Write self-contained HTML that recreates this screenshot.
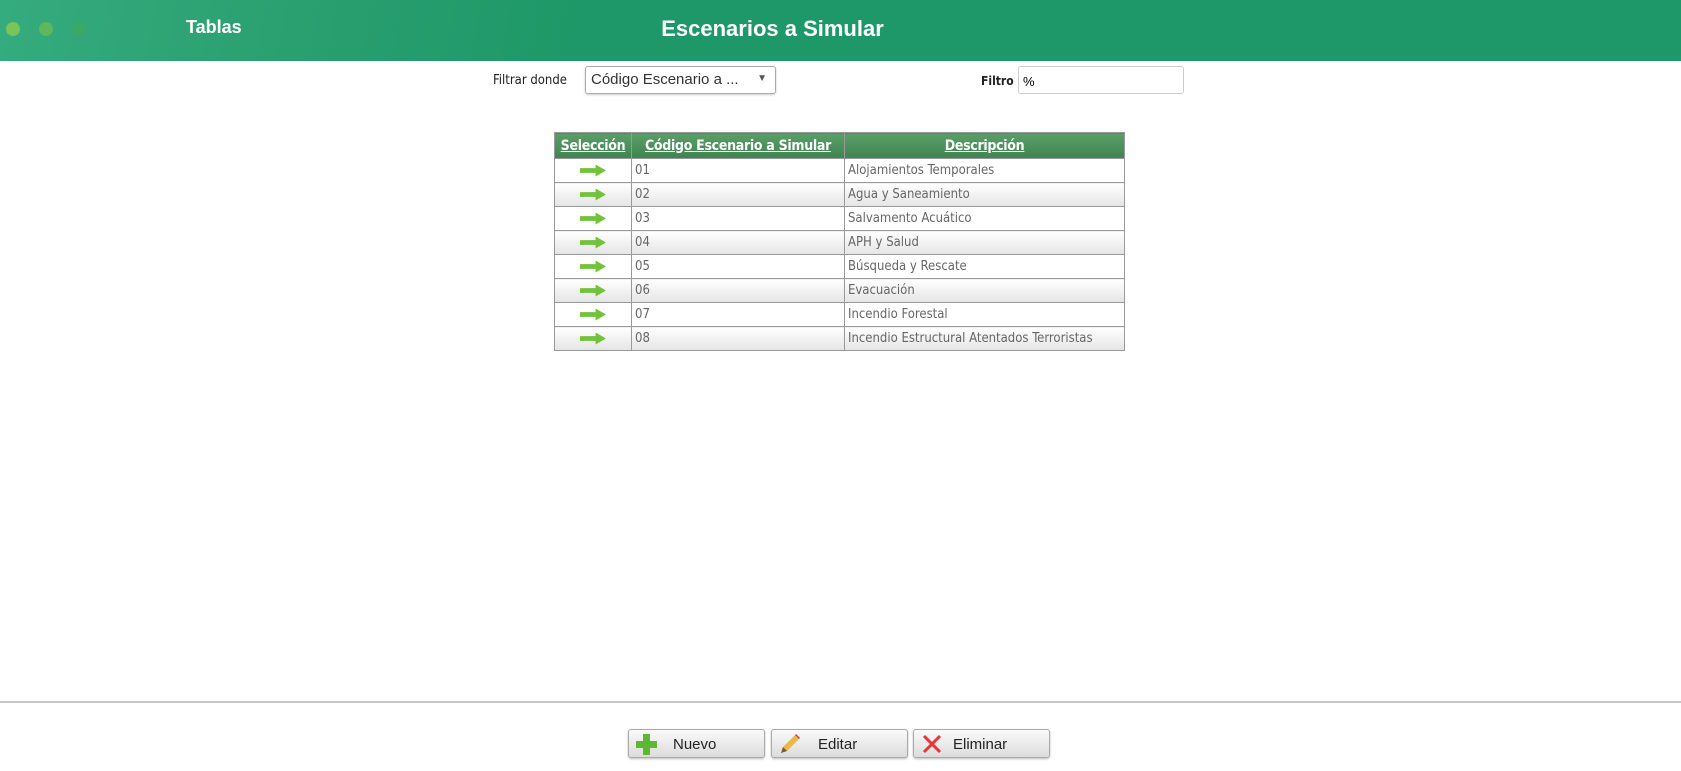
<!DOCTYPE html>
<html><head><meta charset="utf-8"><style>
body{margin:0;width:1681px;height:771px;background:#fff;font-family:"Liberation Sans",sans-serif;position:relative;overflow:hidden}
.hdr{position:absolute;left:0;top:0;width:1681px;height:61px;background:linear-gradient(100deg,#35ac7e 0%,#2a9f70 18%,#1e9868 35%,#1e9868 100%)}
.dot{position:absolute;top:22px;width:14px;height:14px;border-radius:50%}
.t1{position:absolute;left:186px;top:17px;color:#fff;font-weight:bold;font-size:18px}
.t2{position:absolute;width:1681px;text-align:center;top:16px;color:#fff;font-weight:bold;font-size:22px;left:-68px}
.lbl{position:absolute;font-size:13px;color:#222;top:73px;font-family:"DejaVu Sans Condensed","Liberation Sans",sans-serif}
.sel{position:absolute;left:585px;top:66px;width:191px;height:28px;box-sizing:border-box;border:1px solid #aaa;border-radius:3px;font-size:15px;color:#333;padding:4px 5px;box-shadow:0 1px 2px #ccc}
.inp{position:absolute;left:1018px;top:66px;width:166px;height:28px;box-sizing:border-box;border:1px solid #ccc;border-radius:3px;font-size:13px;padding:7px 4px}
table{position:absolute;left:554px;top:132px;border-collapse:collapse;width:571px}
th{height:25px;background:linear-gradient(#5a9e68,#3f8450);color:#fff;font-size:14px;text-decoration:underline;border:1px solid #999;padding:0;font-family:"DejaVu Sans Condensed","Liberation Sans",sans-serif;letter-spacing:-0.3px}
td{height:23px;border:1px solid #999;font-size:13px;color:#666;padding:0 3px;font-family:"DejaVu Sans Condensed","Liberation Sans",sans-serif}
tr:nth-child(odd) td{background:linear-gradient(#fff,#e4e4e4)}
.arr{text-align:center;font-size:0}
.arr::after{content:"";display:inline-block;width:26px;height:12px;background:#72c23c;clip-path:polygon(0 30%,60% 30%,60% 0,100% 50%,60% 100%,60% 70%,0 70%)}
.line{position:absolute;left:0;top:701px;width:1681px;height:2px;background:#c8c8c8}
.btn{position:absolute;top:729px;height:29px;width:137px;box-sizing:border-box;border:1px solid #aaa;border-radius:3px;background:linear-gradient(#fafafa,#dcdcdc);font-size:15px;color:#222;box-shadow:0 1px 2px #bbb}
.btn span{position:absolute;top:6px}
.btn svg{position:absolute;left:6px;top:3px}
</style></head><body>
<div class="hdr">
<div class="dot" style="left:6px;background:#7cc35a"></div>
<div class="dot" style="left:39px;background:#5fb75c"></div>
<div class="dot" style="left:72px;background:#3aa965"></div>
<div class="t1">Tablas</div>
<div class="t2">Escenarios a Simular</div>
</div>
<div class="lbl" style="left:493px">Filtrar donde</div>
<div class="sel">Código Escenario a ...<span style="position:absolute;right:8px;top:6px;font-size:10px;color:#555">▼</span></div>
<div class="lbl" style="left:981px;font-weight:bold;font-size:12px;top:74px">Filtro</div>
<div class="inp">%</div>
<table>
<tr><th style="width:76px">Selección</th><th style="width:212px">Código Escenario a Simular</th><th>Descripción</th></tr>
<tr><td class="arr">➡</td><td>01</td><td>Alojamientos Temporales</td></tr>
<tr><td class="arr">➡</td><td>02</td><td>Agua y Saneamiento</td></tr>
<tr><td class="arr">➡</td><td>03</td><td>Salvamento Acuático</td></tr>
<tr><td class="arr">➡</td><td>04</td><td>APH y Salud</td></tr>
<tr><td class="arr">➡</td><td>05</td><td>Búsqueda y Rescate</td></tr>
<tr><td class="arr">➡</td><td>06</td><td>Evacuación</td></tr>
<tr><td class="arr">➡</td><td>07</td><td>Incendio Forestal</td></tr>
<tr><td class="arr">➡</td><td>08</td><td>Incendio Estructural Atentados Terroristas</td></tr>
</table>
<div class="line"></div>
<div class="btn" style="left:628px"><svg width="24" height="22"><path d="M8 1h7v7h7v7h-7v7H8v-7H1V8h7z" fill="#5bb830"/></svg><span style="left:44px">Nuevo</span></div>
<div class="btn" style="left:771px"><svg width="24" height="22"><path d="M3 20l2-6L17 2l4 4L9 18z" fill="#e8b84a"/><path d="M3 20l2-6 4 4z" fill="#7a5a3a"/><path d="M17 2l4 4 1-1-4-4z" fill="#d33"/></svg><span style="left:46px">Editar</span></div>
<div class="btn" style="left:913px"><svg width="24" height="22"><path d="M4 3L20 19M20 3L4 19" stroke="#e33" stroke-width="3"/></svg><span style="left:39px">Eliminar</span></div>
</body></html>
